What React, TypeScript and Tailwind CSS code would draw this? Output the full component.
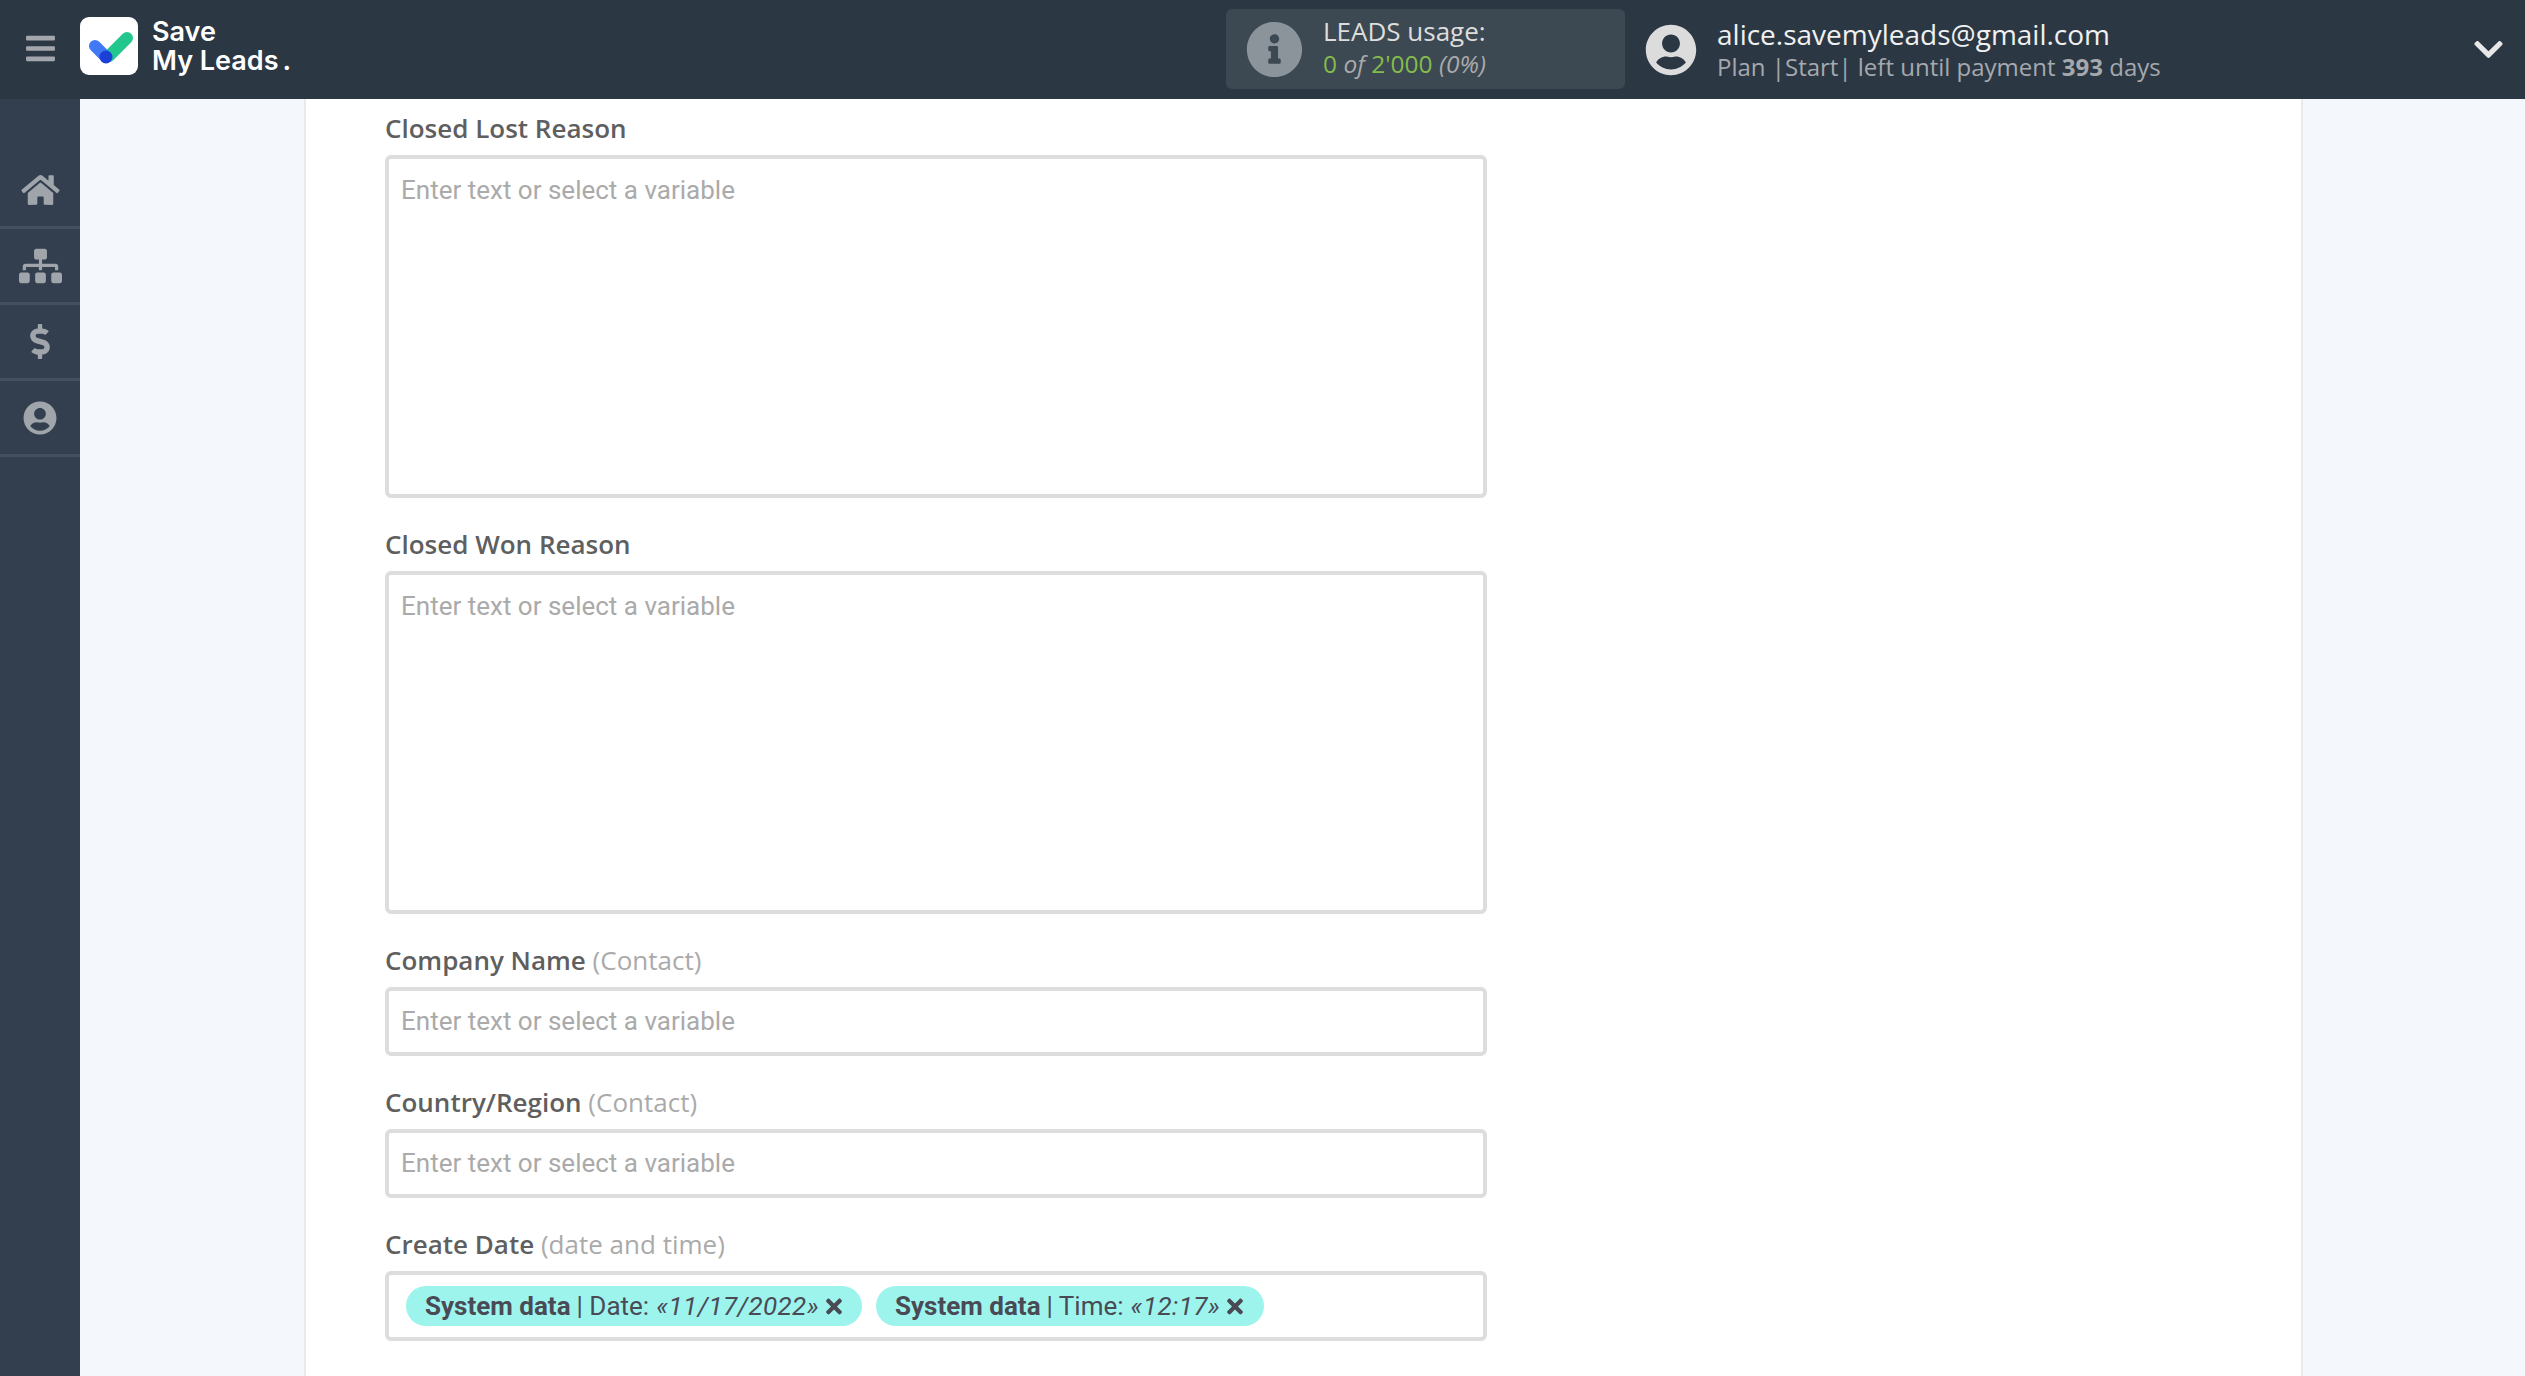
import { FaBars, FaChevronDown, FaDollarSign, FaHome, FaInfoCircle, FaSitemap, FaTimes, FaUserCircle } from "react-icons/fa";

const navIcons = [
  { key: "home", icon: <FaHome className="w-[39px] h-[34px]" /> },
  { key: "flows", icon: <FaSitemap className="w-[43px] h-[36px]" /> },
  { key: "billing", icon: <FaDollarSign className="w-[34px] h-[35px]" /> },
  { key: "profile", icon: <FaUserCircle className="w-[34px] h-[34px]" /> },
];

const Logo = () => {
  return (
    <div className="w-[58px] h-[58px] rounded-[9px] bg-white flex items-center justify-center shrink-0 mb-[7px]">
      <svg width="58" height="58" viewBox="0 0 58 58">
        <line x1="29" y1="39" x2="47" y2="21" stroke="#22c78e" strokeWidth="12" strokeLinecap="round" />
        <line x1="15" y1="29" x2="26" y2="40" stroke="#4178f5" strokeWidth="12" strokeLinecap="round" />
        <circle cx="26" cy="40" r="6.5" fill="#1c3fd8" />
      </svg>
    </div>
  );
};

const Field = ({ label, hint, tall }: { label: string; hint?: string; tall?: boolean }) => {
  return (
    <div className="flex flex-col">
      <p className="h-[34px] leading-[34px] mb-[10px] text-[26px] font-semibold text-[#5f5f5f]">
        {label}
        {hint && <span className="font-normal text-[#aaaaaa]"> {hint}</span>}
      </p>
      <div
        className={`w-[1102px] border-4 border-[#dddddd] rounded-[6px] bg-white px-[12px] font-['Roboto',sans-serif] text-[26px] text-[#aaaaaa] ${
          tall ? "h-[343px] pt-[12px]" : "h-[69px] flex items-center"
        }`}
      >
        Enter text or select a variable
      </div>
    </div>
  );
};

const Chip = ({ name, value, width }: { name: string; value: string; width: string }) => {
  return (
    <span
      className={`h-[40px] rounded-[20px] bg-[#9df4ed] flex items-center pl-[19px] font-['Roboto',sans-serif] text-[26px] text-[#4a4a55] whitespace-nowrap ${width}`}
    >
      <b className="font-bold">System data</b>
      <span className="ml-[6px]">| {name}:</span>
      <i className="ml-[7px] tracking-[0.4px]">«{value}»</i>
      <FaTimes className="w-[20px] h-[23px] ml-[5px]" />
    </span>
  );
};

export default function App() {
  return (
    <div className="h-[1376px] w-[2525px] overflow-hidden flex flex-col bg-[#f4f7fb] font-['Open_Sans',sans-serif]">
      <header className="h-[99px] shrink-0 bg-[#2c3744] flex items-center">
        <div className="w-[80px] flex justify-center mb-[3px]">
          <FaBars className="w-[31px] h-[33px] text-[#a3a7ad]" />
        </div>
        <Logo />
        <div className="ml-[14px] mb-[7px] w-[300px] text-white font-['Inter',sans-serif] font-semibold text-[27px] leading-[29px]">
          <div>Save</div>
          <div>My Leads<span className="ml-[4px]">.</span></div>
        </div>
        <div className="ml-[774px] w-[399px] h-[80px] mb-[1px] rounded-[6px] bg-[#3c4852] flex items-center pl-[20px]">
          <FaInfoCircle className="w-[57px] h-[57px] text-[#8b949b]" />
          <div className="ml-[20px] mb-[4px]">
            <div className="text-[26px] leading-[34px] text-[#dddddd]">LEADS usage:</div>
            <div className="text-[24.5px] leading-[32px] italic text-[#aaaaaa]">
              <span className="not-italic text-[#84bb4c]">0</span> of{" "}
              <span className="not-italic text-[#84bb4c]">2'000</span> (0%)
            </div>
          </div>
        </div>
        <FaUserCircle className="ml-[20px] w-[52px] h-[52px] text-[#dcdcdc]" />
        <div className="ml-[20px] mb-[2px]">
          <div className="text-[28px] leading-[36px] text-[#f0f0f0]">alice.savemyleads@gmail.com</div>
          <div className="text-[24px] leading-[30px] text-[#a5a9ad]">
            Plan |Start| left until payment <b className="font-bold">393</b> days
          </div>
        </div>
        <FaChevronDown className="ml-auto mr-[22px] w-[29px] h-[33px] text-[#e8e8e8]" />
      </header>

      <div className="flex-1 flex min-h-0">
        <nav className="w-[80px] shrink-0 bg-[#333f4e] pt-[54px]">
          {navIcons.map((item) => (
            <div
              key={item.key}
              className="h-[76px] border-b-[3px] border-[#435060] flex items-center justify-center text-[#a0a5ab]"
            >
              {item.icon}
            </div>
          ))}
        </nav>

        <main className="flex-1 min-w-0 pl-[224px]">
          <div className="w-[1999px] h-full bg-white border-x-2 border-[#e8eaec] pl-[79px] flex flex-col gap-[29px] pt-[12px]">
            <Field label="Closed Lost Reason" tall />
            <Field label="Closed Won Reason" tall />
            <Field label="Company Name" hint="(Contact)" />
            <Field label="Country/Region" hint="(Contact)" />
            <div className="flex flex-col">
              <p className="h-[34px] leading-[34px] mb-[10px] text-[26px] font-semibold text-[#5f5f5f]">
                Create Date <span className="font-normal text-[#aaaaaa]">(date and time)</span>
              </p>
              <div className="w-[1102px] h-[70px] border-4 border-[#dddddd] rounded-[6px] bg-white flex items-center pl-[17px] gap-[14px]">
                <Chip name="Date" value="11/17/2022" width="w-[456px]" />
                <Chip name="Time" value="12:17" width="w-[388px]" />
              </div>
            </div>
          </div>
        </main>
      </div>
    </div>
  );
}
